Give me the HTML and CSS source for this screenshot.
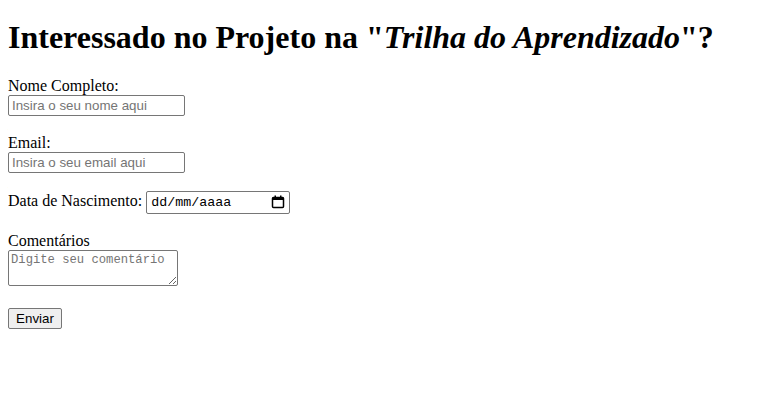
FILE: index.html
```html
<!DOCTYPE html>
<html lang="pt-BR">
<head>
<meta charset="utf-8">
<title>Trilha do Aprendizado</title>
<link rel="stylesheet" href="styles.css">
</head>
<body class="page">
<h1 class="title">Interessado no Projeto na "<em>Trilha do Aprendizado</em>"?</h1>
<form class="form">
<label class="label" for="nome">Nome Completo:</label><br>
<input class="field" type="text" id="nome" placeholder="Insira o seu nome aqui"><br><br>
<label class="label" for="email">Email:</label><br>
<input class="field" type="email" id="email" placeholder="Insira o seu email aqui"><br><br>
<label class="label" for="data">Data de Nascimento:</label>
<span class="date-field"><input class="date-input" type="text" id="data" placeholder="dd/mm/aaaa"><svg class="cal" width="14" height="14" viewBox="0 0 14 14"><rect x="1.5" y="2.5" width="11" height="10" rx="1" fill="none" stroke="#000" stroke-width="1.5"/><rect x="1.5" y="2.5" width="11" height="2.5" fill="#000"/><rect x="3.5" y="0.5" width="1.5" height="2.5" fill="#000"/><rect x="9" y="0.5" width="1.5" height="2.5" fill="#000"/></svg></span><br><br>
<label class="label" for="coment">Comentários</label><br>
<textarea class="area" id="coment" placeholder="Digite seu comentário"></textarea><br><br>
<button class="btn" type="submit">Enviar</button>
</form>
</body>
</html>
```
FILE: styles.css
```css
.page {
  margin: 8px;
  font-family: "Liberation Serif", "Times New Roman", serif;
  font-size: 16px;
  color: #000;
  background: #fff;
}
.title {
  font-size: 32px;
  font-weight: bold;
  margin: 10.5px 0 21.44px;
}
.field {
  font-family: "Liberation Sans", Arial, sans-serif;
  font-size: 13.33px;
  width: 177px;
  height: 21px;
  box-sizing: border-box;
  border: 1px solid #767676;
  border-radius: 2px;
  padding: 1px 3px;
}
.field::placeholder { color: #757575; }
.date-field {
  display: inline-flex;
  align-items: center;
  width: 144px;
  height: 23px;
  box-sizing: border-box;
  border: 1px solid #767676;
  border-radius: 2px;
  padding: 0 4px 0 4px;
  vertical-align: middle;
}
.date-input {
  border: none;
  outline: none;
  padding: 0;
  width: 110px;
  font-family: "Liberation Mono", "Courier New", monospace;
  font-size: 13.33px;
  flex: 1;
}
.date-input::placeholder { color: #000; }
.cal { flex: none; }
.area {
  font-family: "Liberation Mono", "Courier New", monospace;
  font-size: 12.2px;
  width: 170px;
  height: 36px;
  box-sizing: border-box;
  border: 1px solid #767676;
  border-radius: 2px;
  padding: 2px;
}
.area::placeholder { color: #757575; }
.btn {
  font-family: "Liberation Sans", Arial, sans-serif;
  font-size: 13.33px;
  width: 54px;
  height: 21px;
  border: 1px solid #767676;
  border-radius: 2px;
  background: #efefef;
  padding: 1px 6px;
}
```
